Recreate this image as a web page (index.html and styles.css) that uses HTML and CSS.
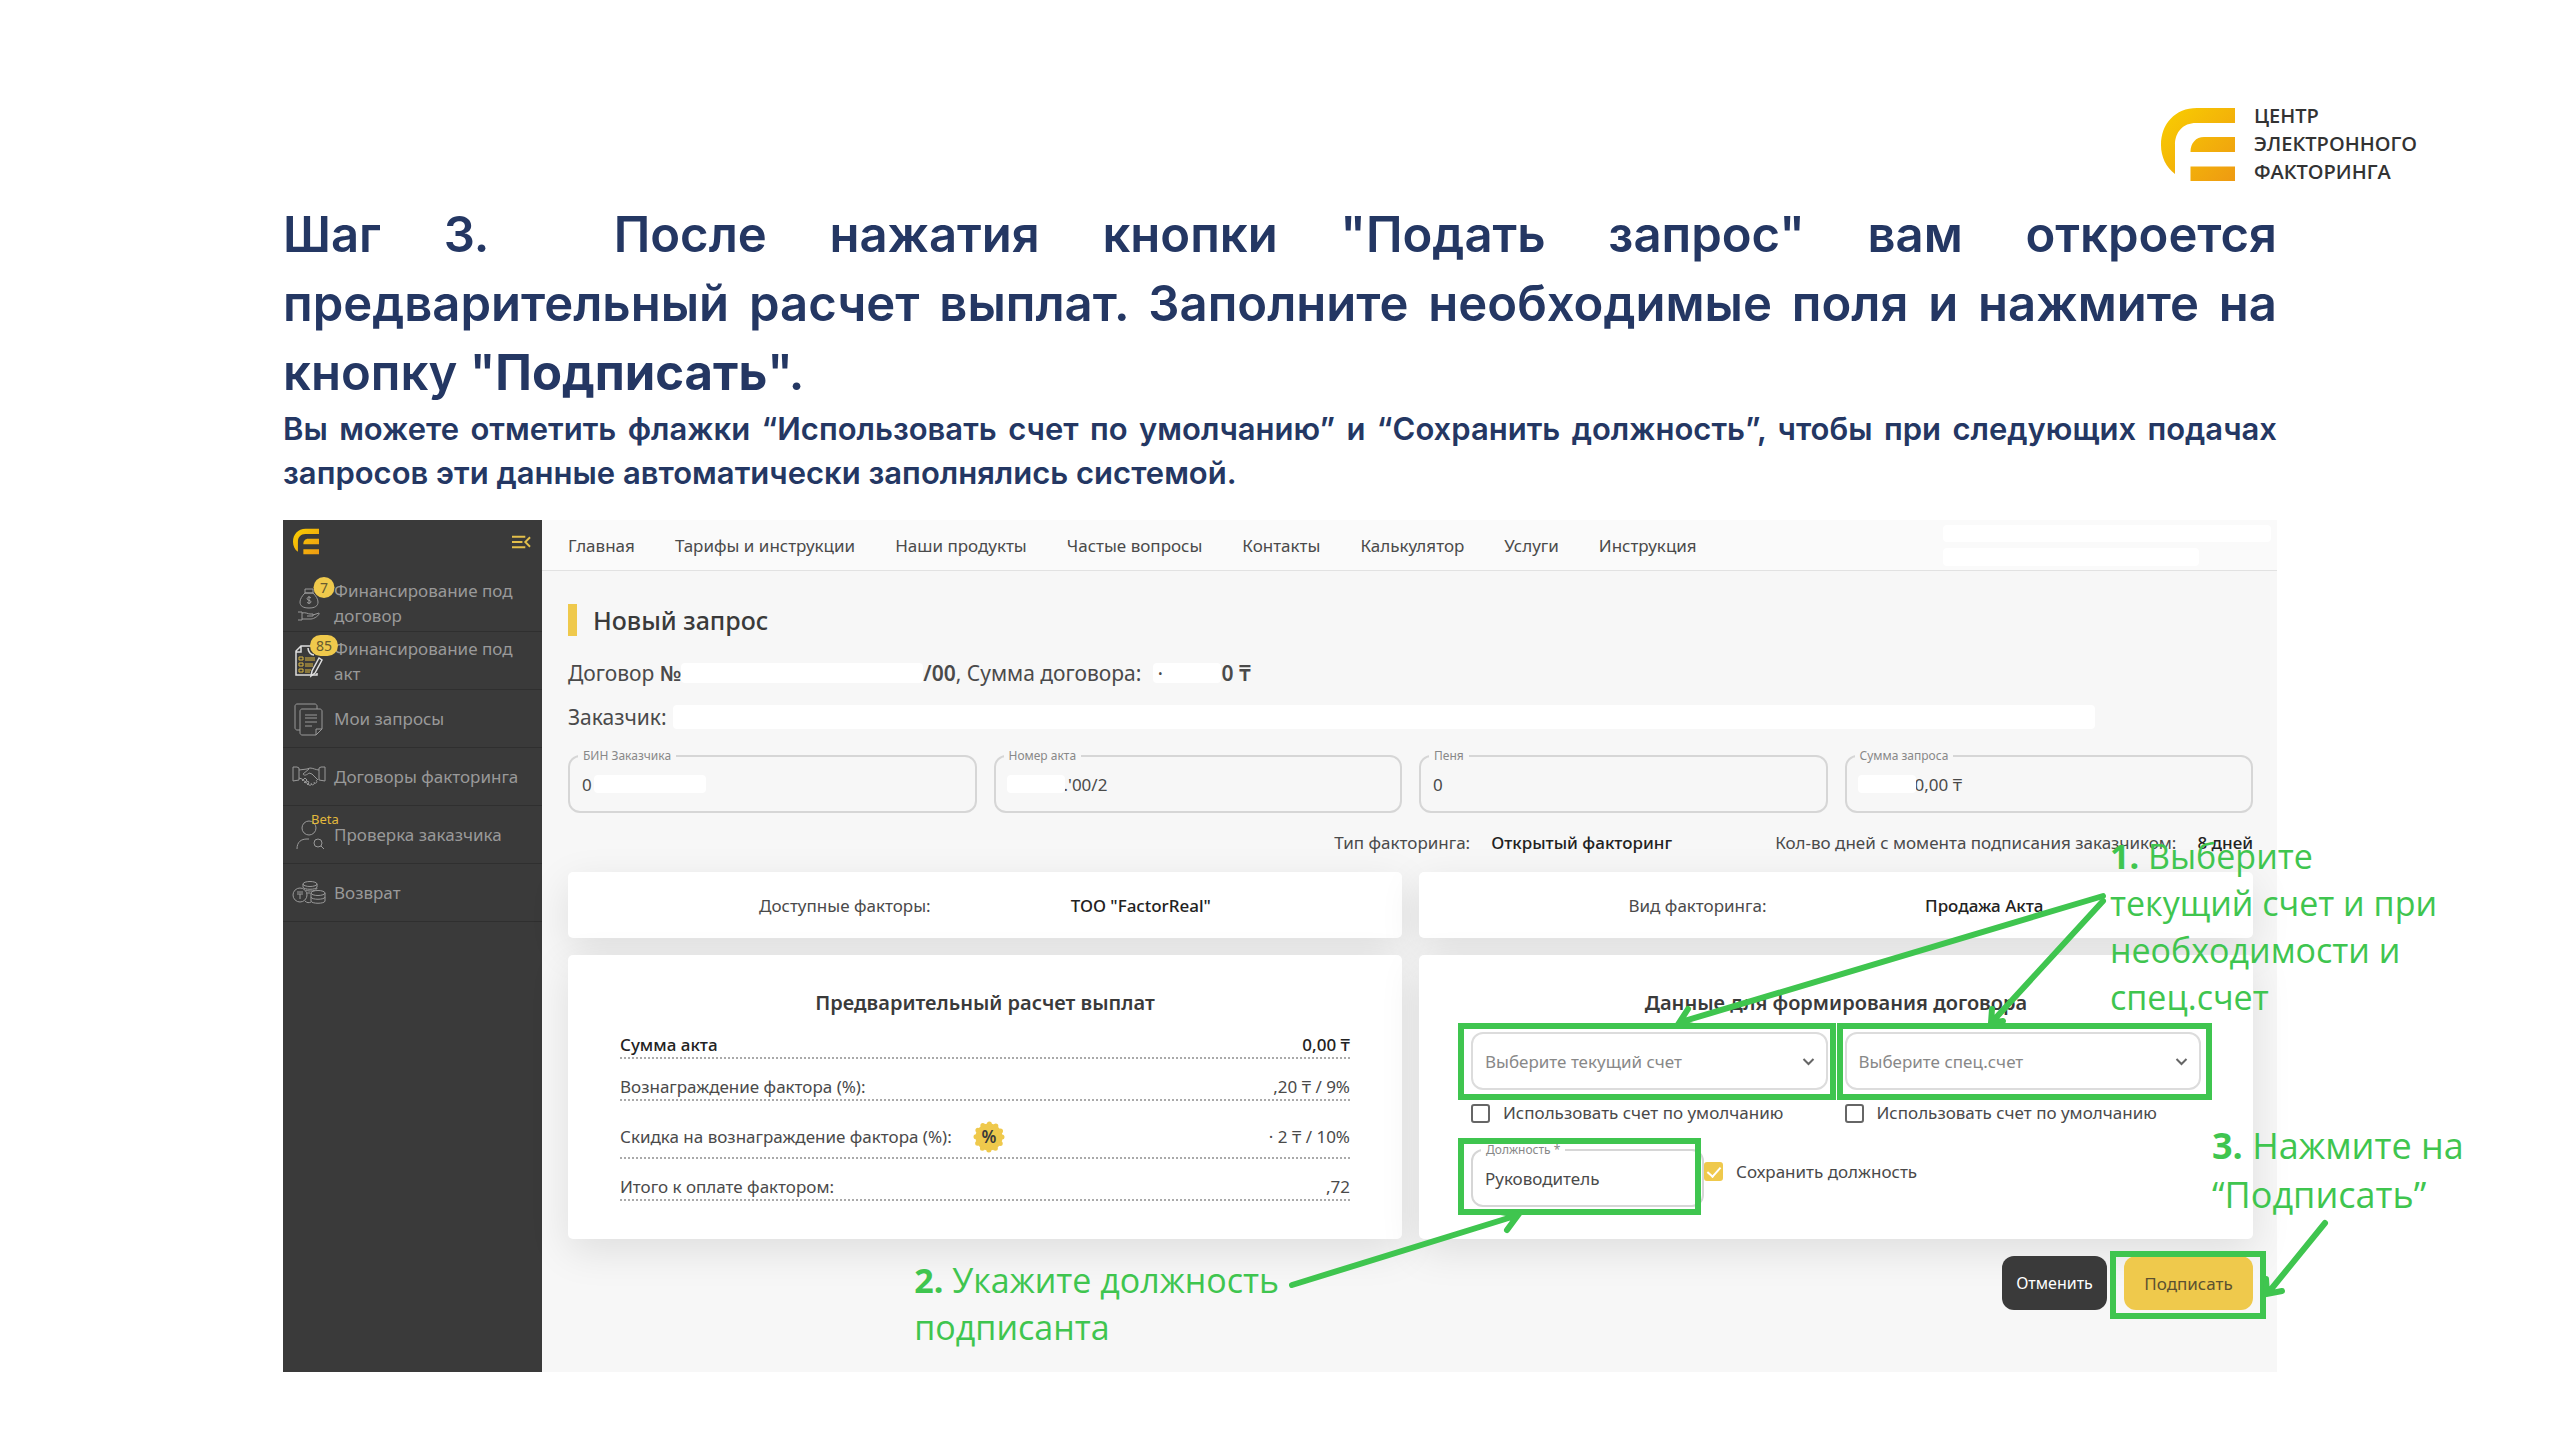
FILE: index.html
```html
<!DOCTYPE html>
<html lang="ru">
<head>
    <meta charset="UTF-8">
    <meta name="viewport" content="width=device-width, initial-scale=1.0">
    <title>Шаг 3. Новый запрос</title>
    <link rel="stylesheet" href="styles.css">
</head>
<body>
    <svg width="0" height="0" class="defs">
        <defs>
            <linearGradient id="gold" x1="0" y1="0" x2="1" y2="1">
                <stop offset="0" stop-color="#f9cf00"/>
                <stop offset="1" stop-color="#ee9a12"/>
            </linearGradient>
            <symbol id="mark" viewBox="0 0 74 73">
                <path fill="url(#gold)" d="M74 0H36C14 0 0 16 0 37c0 12 5 22 14 29V37c0-13 8-22 21-22h39zM74 29H43c-8 0-13.500 6-13.500 15H74zM29.500 58.500H74V73H29.500z"/>
            </symbol>
        </defs>
    </svg>
    <div class="slide">
        <header class="brand">
            <svg class="brand-mark"><use href="#mark"/></svg>
            <div class="brand-name">ЦЕНТР<br>ЭЛЕКТРОННОГО<br>ФАКТОРИНГА</div>
        </header>
        <h1 class="heading"><span class="heading-first">Шаг 3. &nbsp;После нажатия кнопки "Подать запрос" вам откроется</span> предварительный расчет выплат. Заполните необходимые поля и нажмите на кнопку "<b>Подписать</b>".</h1>
        <p class="note">Вы можете отметить флажки “Использовать счет по умолчанию” и “Сохранить должность”, чтобы при следующих подачах запросов эти данные автоматически заполнялись системой.</p>

        <div class="app">
            <aside class="sidebar">
                <div class="sidebar-top">
                    <svg class="sidebar-mark"><use href="#mark"/></svg>
                    <svg class="collapse" viewBox="0 0 20 14"><path d="M0 1.500h14M0 7h11M0 12.500h14M19 2l-5 5 5 5"/></svg>
                </div>
                <nav class="menu">
                    <a class="menu-item" href="#">
                        <span class="menu-icon">
                            <svg viewBox="0 0 32 34"><path d="M12 3h8v4h-8zM12 7c-3 3-5 6-5 9 0 4 3 6 9 6s9-2 9-6c0-3-2-6-5-9zM18 12c-1-1.500-4-1-4 .8s4 1.200 4 3-3 2-4 .5M16 10v8M5 26h4v8H5M9 27c4-1 6 1 8 1h3v2h-6M20 29l6-2c1 2-5 6-8 6H9"/></svg>
                            <span class="badge">7</span>
                        </span>
                        <span>Финансирование под договор</span>
                    </a>
                    <a class="menu-item" href="#">
                        <span class="menu-icon active">
                            <svg viewBox="0 0 32 34"><path d="M24 29v2H3V7l5-5h13M3 8h5V2M15 4c0 4 3 7 6 7"/><path d="M18 32l1-5 7-13 3 2-7 13z"/><path class="gold" d="M6 13h4v3H6zM6 19h4v3H6zM6 25h4v3H6zM12 14h10M12 16h10M12 20h8M12 22h8M12 26h6M12 28h5"/></svg>
                            <span class="badge">85</span>
                        </span>
                        <span>Финансирование под акт</span>
                    </a>
                    <a class="menu-item" href="#">
                        <span class="menu-icon">
                            <svg viewBox="0 0 32 34"><path d="M7 28H4c-1 0-2-1-2-2V4c0-1 1-2 2-2h18c1 0 2 1 2 2v3M9 7h18c1 0 2 1 2 2v18l-6 6H9c-1 0-2-1-2-2V9c0-1 1-2 2-2zM29 27h-6v6M12 13h12M12 16h12M12 20h12M12 24h7"/></svg>
                        </span>
                        <span>Мои запросы</span>
                    </a>
                    <a class="menu-item" href="#">
                        <span class="menu-icon">
                            <svg viewBox="0 0 32 34"><path d="M0 7h4l2 1v12l-6 1zM32 7h-4l-2 1v12l6 1zM6 10c3 0 5-1 8-1l3-1c3 0 6 2 9 2M16 9l-6 5c1 2 4 1 6-1l3 1 6 6M6 18l3 1 7 6c2 1 3-1 2-2M18 24c2 2 4 0 3-2M21 23c2 1 4-1 2-3M9 21l3-3 2 2-3 3M12 23l3-2 1 2-2 2"/></svg>
                        </span>
                        <span>Договоры факторинга</span>
                    </a>
                    <a class="menu-item" href="#">
                        <span class="menu-icon">
                            <svg viewBox="0 0 32 34"><circle cx="16" cy="10" r="7"/><path d="M4 31c0-7 4-10 10-10h2M28 28l3 3"/><circle cx="25" cy="25" r="4"/></svg>
                            <span class="beta">Beta</span>
                        </span>
                        <span>Проверка заказчика</span>
                    </a>
                    <a class="menu-item" href="#">
                        <span class="menu-icon">
                            <svg viewBox="0 0 32 34"><circle cx="7" cy="19" r="7"/><path d="M4 16h6M4 18h6M7 18v5"/><ellipse cx="17" cy="8" rx="7" ry="2.500"/><path d="M10 8v3c0 3 14 3 14 0V8M13 14c3 2 11 1 11-2M14 17h3"/><ellipse cx="25" cy="17" rx="7" ry="2.500"/><path d="M18 17v8c0 3 14 3 14 0v-8M18 21c0 3 14 3 14 0M12 25c2 2 4 2 6 1"/></svg>
                        </span>
                        <span>Возврат</span>
                    </a>
                </nav>
            </aside>

            <div class="content">
                <nav class="topbar">
                    <a href="#">Главная</a>
                    <a href="#">Тарифы и инструкции</a>
                    <a href="#">Наши продукты</a>
                    <a href="#">Частые вопросы</a>
                    <a href="#">Контакты</a>
                    <a href="#">Калькулятор</a>
                    <a href="#">Услуги</a>
                    <a href="#">Инструкция</a>
                    <div class="user">
                        <span class="mask user-name"></span>
                        <span class="mask user-company"></span>
                    </div>
                </nav>

                <main class="main">
                    <h2 class="title">Новый запрос</h2>
                    <p class="line">Договор&nbsp;<b>№</b><span class="mask mask-contract"></span><b>/00</b>, Сумма договора:<span class="mask mask-sum">·</span><b>0 ₸</b></p>
                    <p class="line">Заказчик:<span class="mask mask-customer"></span></p>

                    <div class="fields">
                        <div class="field">
                            <label for="bin">БИН Заказчика</label>
                            <input id="bin" type="text" value="0" readonly>
                            <span class="mask field-mask after"></span>
                        </div>
                        <div class="field shifted">
                            <label for="act">Номер акта</label>
                            <input id="act" type="text" value=".'00/2" readonly>
                            <span class="mask field-mask"></span>
                        </div>
                        <div class="field">
                            <label for="fine">Пеня</label>
                            <input id="fine" type="text" value="0" readonly>
                        </div>
                        <div class="field shifted">
                            <label for="sum">Сумма запроса</label>
                            <input id="sum" type="text" value="0,00 ₸" readonly>
                            <span class="mask field-mask"></span>
                        </div>
                    </div>

                    <div class="info">
                        <span>Тип факторинга:</span><b>Открытый факторинг</b>
                        <span class="info-days">Кол-во дней с момента подписания заказчиком:</span><b>8 дней</b>
                    </div>

                    <div class="cards">
                        <section class="card summary"><span>Доступные факторы:</span><b>ТОО "FactorReal"</b></section>
                        <section class="card summary"><span>Вид факторинга:</span><b>Продажа Акта</b></section>

                        <section class="card">
                            <h3>Предварительный расчет выплат</h3>
                            <dl class="calc">
                                <div class="calc-row total"><dt>Сумма акта</dt><dd>0,00 ₸</dd></div>
                                <div class="calc-row"><dt>Вознаграждение фактора (%):</dt><dd>,20 ₸ / 9%</dd></div>
                                <div class="calc-row discount">
                                    <dt>Скидка на вознаграждение фактора (%):
                                        <svg class="percent" viewBox="0 0 32 32">
                                            <circle cx="16" cy="16" r="13.500" fill="#efc94c"/>
                                            <circle cx="16" cy="16" r="13" fill="none" stroke="#efc94c" stroke-width="5" stroke-linecap="round" stroke-dasharray="0 6.807"/>
                                            <text x="16" y="22" text-anchor="middle">%</text>
                                        </svg>
                                    </dt>
                                    <dd>· 2 ₸ / 10%</dd>
                                </div>
                                <div class="calc-row"><dt>Итого к оплате фактором:</dt><dd>,72</dd></div>
                            </dl>
                        </section>

                        <section class="card">
                            <h3>Данные для формирования договора</h3>
                            <div class="accounts">
                                <div>
                                    <div class="select marked">
                                        <select aria-label="Текущий счет"><option>Выберите текущий счет</option></select>
                                        <svg viewBox="0 0 12 8"><path d="M1 1l5 5 5-5"/></svg>
                                    </div>
                                    <label class="check"><input type="checkbox">Использовать счет по умолчанию</label>
                                </div>
                                <div>
                                    <div class="select marked">
                                        <select aria-label="Спец.счет"><option>Выберите спец.счет</option></select>
                                        <svg viewBox="0 0 12 8"><path d="M1 1l5 5 5-5"/></svg>
                                    </div>
                                    <label class="check"><input type="checkbox">Использовать счет по умолчанию</label>
                                </div>
                            </div>
                            <div class="position">
                                <div class="field marked">
                                    <label for="position">Должность *</label>
                                    <input id="position" type="text" value="Руководитель">
                                </div>
                                <label class="check"><input type="checkbox" checked>Сохранить должность</label>
                            </div>
                        </section>
                    </div>

                    <div class="actions">
                        <button class="btn btn-dark" type="button">Отменить</button>
                        <div class="marked sign"><button class="btn btn-gold" type="button">Подписать</button></div>
                    </div>
                </main>
            </div>

            <!-- стрелки и подписи поверх формы -->
            <svg class="arrows" viewBox="0 0 1100 500">
                <path d="M926 26L504 152M511 139l-9 14 14 3"/>
                <path d="M926 31L815 152M815 139l-1 14 12-2"/>
                <path d="M115 415L338 346M324 342l17 3-11 15"/>
                <path d="M1148 353L1091 423M1089 409l1 15 15-3"/>
            </svg>
            <p class="callout callout-1"><b>1.</b> Выберите<br>текущий счет и при<br>необходимости и<br>спец.счет</p>
            <p class="callout callout-2"><b>2.</b> Укажите должность<br>подписанта</p>
            <p class="callout callout-3"><b>3.</b> Нажмите на<br>“Подписать”</p>
        </div>
    </div>
</body>
</html>
```
FILE: styles.css
```css
* {
    margin: 0;
    padding: 0;
    box-sizing: border-box;
}
body {
    background-color: #fff;
    font-family: "Noto Sans", "Open Sans", sans-serif;
    font-size: 17px;
    color: #4a4a4a;
    overflow-x: hidden;
}
a {
    color: inherit;
    text-decoration: none;
}
input, select, button {
    font: inherit;
    color: inherit;
}
.defs {
    position: absolute;
}
.slide {
    padding: 102px 283px 68px;
}
.brand {
    display: flex;
    justify-content: flex-end;
    align-items: center;
    gap: 19px;
    margin-right: -140px;
    margin-bottom: 14px;
}
.brand-mark {
    width: 74px;
    height: 73px;
}
.brand-name {
    font-family: "Open Sans", "Noto Sans", sans-serif;
    font-size: 20px;
    font-weight: 600;
    line-height: 28px;
    color: #333;
}
.heading {
    font-family: Inter, sans-serif;
    font-size: 49px;
    font-weight: 600;
    line-height: 69px;
    color: #243763;
    text-align: justify;
}
.heading-first {
    display: block;
    text-align-last: justify;
}
.heading b {
    font-weight: 700;
}
.note {
    font-family: Inter, sans-serif;
    font-size: 31px;
    font-weight: 600;
    line-height: 44px;
    color: #243763;
    text-align: justify;
    margin-bottom: 25px;
}

.app {
    display: flex;
    position: relative;
    min-height: 852px;
    background-color: #f7f7f7;
}
.sidebar {
    flex: 0 0 259px;
    background-color: #3a3a3a;
}
.sidebar-top {
    display: flex;
    justify-content: space-between;
    padding: 8px 11px 0 10px;
    height: 54px;
}
.sidebar-mark {
    width: 26px;
    height: 27px;
}
.collapse {
    width: 19px;
    height: 14px;
    margin-top: 7px;
    fill: none;
    stroke: #e3bf4a;
    stroke-width: 2;
}
.menu-item {
    display: flex;
    align-items: center;
    gap: 9px;
    height: 58px;
    padding-left: 10px;
    border-bottom: 1px solid #2f2f2f;
    line-height: 25px;
    color: #999;
}
.menu-icon {
    position: relative;
    flex: 0 0 32px;
    height: 34px;
}
.menu-icon svg {
    width: 32px;
    height: 34px;
    fill: none;
    stroke: #999;
    overflow: visible;
}
.menu-icon.active svg {
    stroke: #ddd;
    stroke-width: 1.5;
}
.menu-icon.active .gold {
    stroke: #d9b53e;
    stroke-width: 1;
}
.badge {
    position: absolute;
    left: 31px;
    top: -9px;
    transform: translateX(-50%);
    min-width: 21px;
    height: 21px;
    padding: 0 6px;
    border-radius: 11px;
    background-color: #efc94c;
    color: #665a30;
    font-size: 14px;
    line-height: 21px;
    text-align: center;
}
.beta {
    position: absolute;
    left: 18px;
    top: -8px;
    color: #e3b93c;
    font-size: 13px;
    line-height: 18px;
}

.content {
    flex: 1;
    min-width: 0;
}
.topbar {
    display: flex;
    align-items: center;
    gap: 40px;
    height: 51px;
    padding: 0 6px 0 26px;
    background-color: #fafafa;
    border-bottom: 1px solid #e2e2e2;
}
.user {
    margin-left: auto;
    display: flex;
    flex-direction: column;
    gap: 6px;
}
.mask {
    display: inline-block;
    background-color: #fff;
    border-radius: 4px;
}
.user-name {
    width: 328px;
    height: 17px;
}
.user-company {
    width: 256px;
    height: 18px;
}
.main {
    padding: 33px 24px 51px 26px;
}
.title {
    border-left: 9px solid #efc94c;
    padding-left: 16px;
    font-size: 25px;
    font-weight: 500;
    line-height: 32px;
    color: #3a3a3a;
    margin-bottom: 15px;
}
.line {
    display: flex;
    align-items: center;
    font-size: 21px;
    line-height: 44px;
}
.line b {
    font-weight: 600;
}
.info b, .summary b {
    font-weight: 500;
    color: #222;
}
.mask-contract {
    width: 242px;
    height: 20px;
}
.mask-sum {
    width: 68px;
    height: 20px;
    margin-left: 12px;
    padding-left: 4px;
    line-height: 20px;
}
.mask-customer {
    width: 1422px;
    height: 24px;
    margin-left: 6px;
}
.fields {
    display: grid;
    grid-template-columns: repeat(4, 1fr);
    gap: 17px;
    margin-top: 16px;
}
.field {
    position: relative;
    height: 58px;
    border: 2px solid #d6d6d6;
    border-radius: 12px;
    background-color: #f7f7f7;
}
.field label {
    position: absolute;
    left: 8px;
    top: -10px;
    padding: 0 5px;
    background-color: inherit;
    font-size: 12px;
    line-height: 18px;
    color: #888;
}
.field input {
    width: 100%;
    height: 100%;
    padding: 0 12px;
    border: 0;
    outline: none;
    background-color: transparent;
}
.field.shifted input {
    padding-left: 68px;
}
.field-mask {
    position: absolute;
    left: 11px;
    top: 18px;
    width: 58px;
    height: 18px;
}
.field-mask.after {
    left: 24px;
    width: 112px;
}
.info {
    display: flex;
    justify-content: flex-end;
    gap: 21px;
    margin: 18px 0 17px;
    line-height: 24px;
}
.info-days {
    margin-left: 82px;
}
.cards {
    display: grid;
    grid-template-columns: 1fr 1fr;
    gap: 17px;
}
.card {
    padding: 33px 52px 0;
    min-height: 284px;
    border-radius: 5px;
    background-color: #fff;
    box-shadow: 0 12px 40px rgba(0, 0, 0, 0.1);
}
.card.summary {
    display: flex;
    justify-content: space-evenly;
    align-items: center;
    min-height: 66px;
    padding: 0 51px;
}
.card h3 {
    font-size: 20px;
    font-weight: 600;
    line-height: 30px;
    text-align: center;
    color: #3a3a3a;
}
.calc {
    margin-top: 15px;
}
.calc-row {
    display: flex;
    justify-content: space-between;
    align-items: flex-end;
    height: 26px;
    margin-bottom: 16px;
    line-height: 24px;
    border-bottom: 2px dotted #aaa;
}
.calc-row.total {
    font-weight: 500;
    color: #222;
}
.calc-row.discount {
    align-items: center;
    height: 42px;
}
.calc-row dt {
    display: flex;
    align-items: center;
    gap: 21px;
}
.percent {
    width: 32px;
    height: 32px;
}
.percent text {
    font-size: 17px;
    font-weight: 600;
    fill: #3a3a3a;
}
.accounts {
    display: grid;
    grid-template-columns: 1fr 1fr;
    gap: 17px;
    margin-top: 14px;
}
.select {
    position: relative;
    height: 58px;
}
.select select {
    width: 100%;
    height: 100%;
    padding: 0 12px;
    border: 2px solid #dcdcdc;
    border-radius: 12px;
    background-color: #fff;
    color: #888;
    appearance: none;
}
.select svg {
    position: absolute;
    right: 13px;
    top: 26px;
    width: 13px;
    height: 8px;
    fill: none;
    stroke: #666;
    stroke-width: 2;
}
/* зелёная рамка вокруг нужного элемента */
.marked::after {
    content: "";
    position: absolute;
    inset: -9px -8px -10px -13px;
    border: 6px solid #3fc54f;
    pointer-events: none;
}
.accounts div + div .marked::after {
    inset: -9px -11px -10px -8px;
}
.check {
    display: flex;
    align-items: center;
    gap: 13px;
    margin-top: 11px;
    line-height: 24px;
    white-space: nowrap;
}
.check input {
    appearance: none;
    width: 19px;
    height: 19px;
    border: 2px solid #666;
    border-radius: 3px;
}
.check input:checked {
    border-color: #efc94c;
    background-color: #efc94c;
}
.check input:checked::before {
    content: "";
    display: block;
    width: 6px;
    height: 11px;
    margin: 0 auto;
    border: solid #fff;
    border-width: 0 2px 2px 0;
    transform: rotate(42deg);
}
.position {
    display: flex;
    align-items: center;
    margin-top: 24px;
}
.position .field {
    width: 233px;
    background-color: #fff;
}
.position .marked::after {
    inset: -13px 1px -10px -15px;
}
.position .check {
    margin-top: 0;
    padding-bottom: 13px;
}
.actions {
    display: flex;
    justify-content: flex-end;
    gap: 17px;
    margin-top: 17px;
}
.btn {
    height: 54px;
    border: 0;
    border-radius: 12px;
    font-size: 16px;
}
.btn-dark {
    width: 105px;
    background-color: #3a3a3a;
    color: #fff;
}
.btn-gold {
    width: 129px;
    background-color: #efc94c;
    color: #5c5130;
    font-size: 17px;
}
.sign {
    position: relative;
}
.sign.marked::after {
    inset: -5px -13px -9px -14px;
}

.arrows {
    position: absolute;
    right: 0;
    top: 350px;
    width: 1100px;
    height: 500px;
    fill: none;
    stroke: #3fc54f;
    stroke-width: 6;
    stroke-linecap: round;
    overflow: visible;
    pointer-events: none;
}
.callout {
    position: absolute;
    font-family: "Open Sans", "Noto Sans", sans-serif;
    font-size: 34px;
    line-height: 47px;
    color: #3fc54f;
    white-space: nowrap;
}
.callout-1 {
    left: calc(100% - 167px);
    top: 313px;
}
.callout-2 {
    right: 998px;
    top: 737px;
}
.callout-3 {
    left: calc(100% - 65px);
    top: 601px;
    font-size: 36px;
    line-height: 49px;
}
```
